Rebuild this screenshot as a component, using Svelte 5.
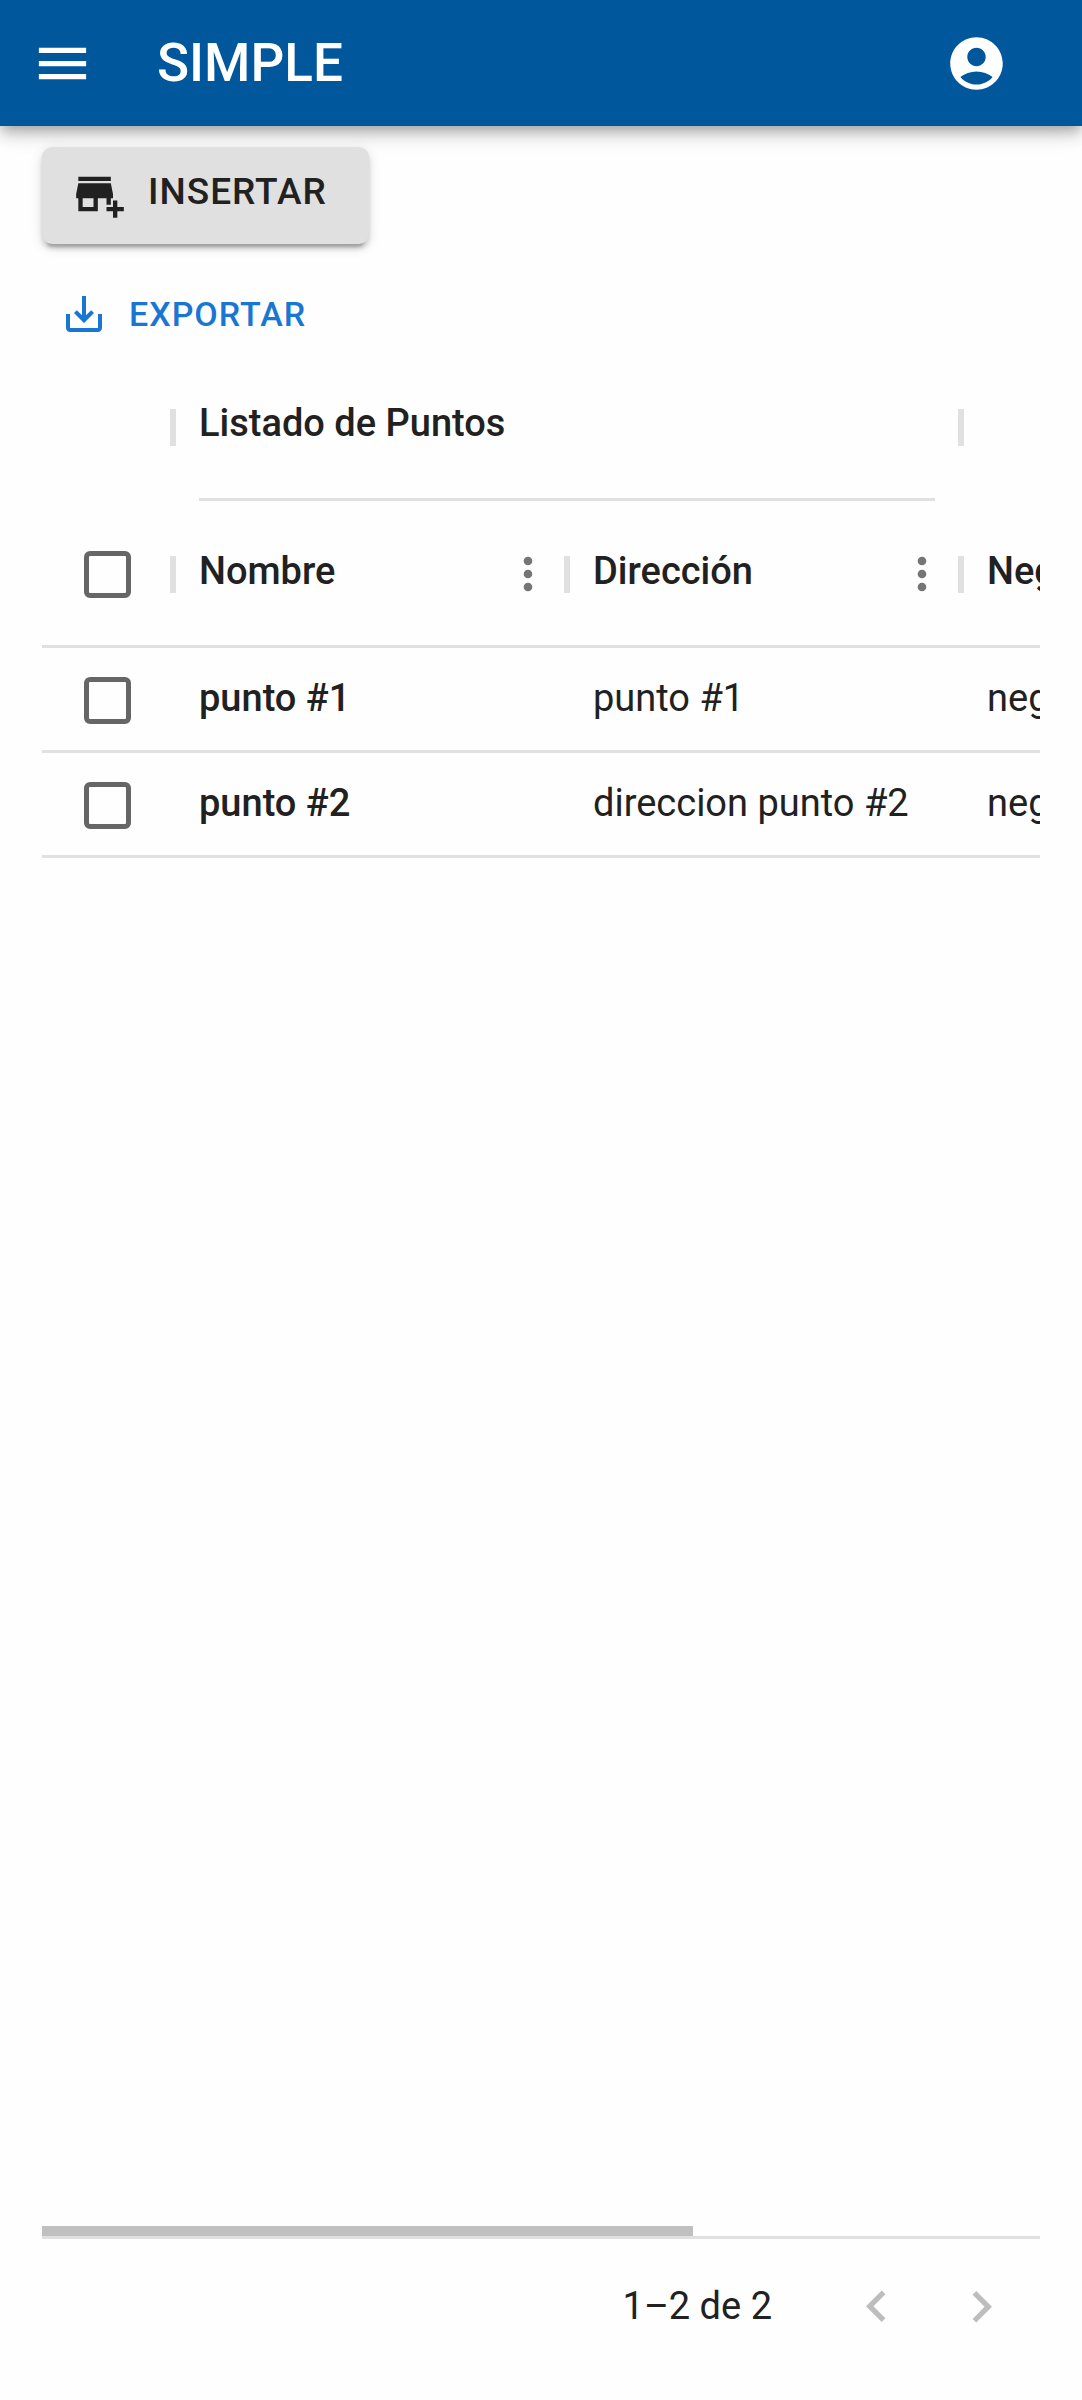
<script>
  const columns = ['Nombre', 'Dirección', 'Negocio'];
  const rows = [
    { nombre: 'punto #1', direccion: 'punto #1', negocio: 'negocio #1' },
    { nombre: 'punto #2', direccion: 'direccion punto #2', negocio: 'negocio #2' }
  ];

  let selected = $state(rows.map(() => false));
  let allSelected = $derived(selected.every(Boolean));

  let viewport = $state();
  let thumbWidth = $state(65);
  let thumbLeft = $state(0);

  function updateThumb() {
    if (!viewport) return;
    thumbWidth = (viewport.clientWidth / viewport.scrollWidth) * 100;
    thumbLeft = (viewport.scrollLeft / viewport.scrollWidth) * 100;
  }

  function toggleAll() {
    const next = !allSelected;
    selected = rows.map(() => next);
  }

  $effect(updateThumb);
</script>

<svelte:window onresize={updateThumb} />

<div class="page">
  <header class="appbar">
    <button class="icon-button" aria-label="Menú">
      <svg viewBox="0 0 24 24"><path d="M3 18h18v-2H3v2zm0-5h18v-2H3v2zm0-7v2h18V6H3z" /></svg>
    </button>
    <h1>SIMPLE</h1>
    <button class="icon-button" aria-label="Cuenta">
      <svg viewBox="0 0 24 24"><path d="M12 2C6.48 2 2 6.48 2 12s4.48 10 10 10 10-4.48 10-10S17.52 2 12 2zm0 4c1.93 0 3.5 1.57 3.500 3.500S13.930 13 12 13s-3.500-1.570-3.500-3.500S10.070 6 12 6zm0 14c-2.030 0-4.430-.82-6.140-2.880C7.550 15.800 9.680 15 12 15s4.450.8 6.140 2.120C16.430 19.180 14.030 20 12 20z" /></svg>
    </button>
  </header>

  <main>
    <button class="insert">
      <svg viewBox="0 0 24 24"><path d="M15 17h2v-3h1v-2l-1-5H2l-1 5v2h1v6h9v-6h4v3zm-6 1H4v-4h5v4zM2 4h15v2H2zM20 18v-3h-2v3h-3v2h3v3h2v-3h3v-2z" fill-rule="evenodd" /></svg>
      <span>INSERTAR</span>
    </button>

    <div class="toolbar">
      <button class="export">
        <svg viewBox="0 0 24 24"><path d="M19 12v7H5v-7H3v7c0 1.100.9 2 2 2h14c1.100 0 2-.9 2-2v-7h-2zm-6 .67l2.590-2.580L17 11.500l-5 5-5-5 1.410-1.410L11 12.670V3h2z" /></svg>
        EXPORTAR
      </button>
    </div>

    <div class="viewport" bind:this={viewport} onscroll={updateThumb}>
      <table>
        <colgroup>
          <col class="check-col" />
          <col class="data-col" />
          <col class="data-col" />
          <col class="data-col" />
          <col />
        </colgroup>
        <thead>
          <tr>
            <td class="separated"></td>
            <th class="separated" colspan="2" scope="colgroup">
              <div class="group">Listado de Puntos</div>
            </th>
            <td colspan="2"></td>
          </tr>
          <tr class="titles">
            <th class="check separated">
              <input type="checkbox" aria-label="Seleccionar todo" checked={allSelected} onchange={toggleAll} />
            </th>
            {#each columns as name}
              <th class="separated" scope="col">
                <div class="title">
                  <span>{name}</span>
                  <button class="menu" aria-label={`Menú de ${name}`}>
                    <svg viewBox="0 0 24 24"><path d="M12 8c1.100 0 2-.9 2-2s-.9-2-2-2-2 .9-2 2 .9 2 2 2zm0 2c-1.100 0-2 .9-2 2s.9 2 2 2 2-.9 2-2-.9-2-2-2zm0 6c-1.100 0-2 .9-2 2s.9 2 2 2 2-.9 2-2-.9-2-2-2z" /></svg>
                  </button>
                </div>
              </th>
            {/each}
            <td></td>
          </tr>
        </thead>
        <tbody>
          {#each rows as row, i}
            <tr>
              <td class="check">
                <input type="checkbox" aria-label={`Seleccionar ${row.nombre}`} bind:checked={selected[i]} />
              </td>
              <td class="text name">{row.nombre}</td>
              <td class="text">{row.direccion}</td>
              <td class="text">{row.negocio}</td>
              <td></td>
            </tr>
          {/each}
        </tbody>
      </table>
    </div>

    <div class="track">
      <div class="thumb" style:width={`${thumbWidth}%`} style:margin-left={`${thumbLeft}%`}></div>
    </div>

    <footer>
      <p>1–2 de 2</p>
      <button class="pager" disabled aria-label="Página anterior">
        <svg viewBox="0 0 24 24"><path d="M15.410 16.090l-4.580-4.590 4.580-4.590L14 5.500l-6 6 6 6z" /></svg>
      </button>
      <button class="pager" disabled aria-label="Página siguiente">
        <svg viewBox="0 0 24 24"><path d="M8.590 16.340l4.580-4.590-4.580-4.590L10 5.750l6 6-6 6z" /></svg>
      </button>
    </footer>
  </main>
</div>

<style>
  :global(body) {
    background: #fefefe;
  }

  .page {
    box-sizing: border-box;
    min-height: 100vh;
    display: flex;
    flex-direction: column;
    font-family: Roboto, 'Liberation Sans', sans-serif;
    font-size: 38px;
    color: #212121;
  }

  button {
    border: 0;
    padding: 0;
    background: none;
    color: inherit;
    font: inherit;
    cursor: pointer;
  }

  svg {
    display: block;
    flex: none;
    width: 52px;
    height: 52px;
    fill: currentColor;
  }

  .appbar {
    display: flex;
    align-items: center;
    height: 126px;
    padding: 0 74px 0 31px;
    background: #01579b;
    color: #fff;
    box-shadow:
      0 5px 10px -3px rgba(0, 0, 0, 0.2),
      0 10px 13px 0 rgba(0, 0, 0, 0.14),
      0 3px 26px 0 rgba(0, 0, 0, 0.12);
  }

  .icon-button svg {
    width: 63px;
    height: 63px;
  }

  h1 {
    flex: 1;
    margin: 0 0 0 63px;
    font-size: 53px;
    font-weight: 500;
    line-height: 84px;
  }

  main {
    flex: 1;
    display: flex;
    flex-direction: column;
    padding: 21px 42px 25px;
  }

  .insert {
    align-self: flex-start;
    display: flex;
    align-items: center;
    gap: 22px;
    height: 97px;
    padding: 0 42px 4px 32px;
    border-radius: 10px;
    background: #e0e0e0;
    font-size: 37px;
    font-weight: 500;
    letter-spacing: 1px;
    box-shadow:
      0 8px 3px -5px rgba(0, 0, 0, 0.2),
      0 5px 5px 0 rgba(0, 0, 0, 0.14),
      0 3px 13px 0 rgba(0, 0, 0, 0.12);
  }

  .insert span {
    padding-bottom: 4px;
  }

  .toolbar {
    display: flex;
    padding: 30px 8px 0;
  }

  .export {
    display: flex;
    align-items: center;
    gap: 21px;
    height: 80px;
    padding: 0 10px;
    color: #1976d2;
    font-size: 34px;
    font-weight: 500;
    letter-spacing: 1px;
  }

  .export svg {
    width: 48px;
    height: 48px;
  }

  .viewport {
    flex: 1;
    overflow-x: auto;
    scrollbar-width: none;
  }

  table {
    width: 1530px;
    table-layout: fixed;
    border-collapse: separate;
    border-spacing: 0;
  }

  .check-col {
    width: 131px;
  }

  .data-col {
    width: 394px;
  }

  th,
  td {
    box-sizing: border-box;
    padding: 0;
    text-align: left;
    font-weight: 400;
    white-space: nowrap;
  }

  thead tr > * {
    height: 147px;
  }

  th {
    font-weight: 500;
  }

  .separated {
    position: relative;
  }

  .separated::after {
    content: '';
    position: absolute;
    top: 55px;
    right: -3px;
    width: 6px;
    height: 37px;
    background: #e0e0e0;
  }

  .group {
    box-sizing: border-box;
    height: 147px;
    margin: 0 26px;
    border-bottom: 3px solid #e0e0e0;
    line-height: 138px;
  }

  .title {
    display: flex;
    align-items: center;
    justify-content: space-between;
    padding: 0 13px 0 26px;
  }

  .title span {
    padding-bottom: 6px;
  }

  .menu {
    color: #757575;
  }

  .titles > *,
  tbody td {
    padding-top: 2px;
    border-bottom: 3px solid #e0e0e0;
  }

  tbody td {
    height: 105px;
  }

  tbody .text {
    padding: 0 26px 2px;
  }

  .name {
    font-weight: 500;
  }

  input {
    appearance: none;
    box-sizing: border-box;
    display: block;
    width: 47px;
    height: 47px;
    margin: 0 auto;
    border: 5px solid #666;
    border-radius: 6px;
  }

  input:checked {
    border-color: #1976d2;
    background: #1976d2;
  }

  .track {
    border-bottom: 3px solid #e0e0e0;
  }

  .thumb {
    height: 10px;
    background: #c0c0c0;
  }

  footer {
    display: flex;
    align-items: center;
    justify-content: flex-end;
    height: 136px;
    padding-right: 6px;
  }

  footer p {
    margin: 0 52px 0 0;
    padding-bottom: 2px;
  }

  .pager {
    padding: 0 21px;
    color: #bdbdbd;
    cursor: default;
  }

  .pager svg {
    width: 63px;
    height: 63px;
  }
</style>
